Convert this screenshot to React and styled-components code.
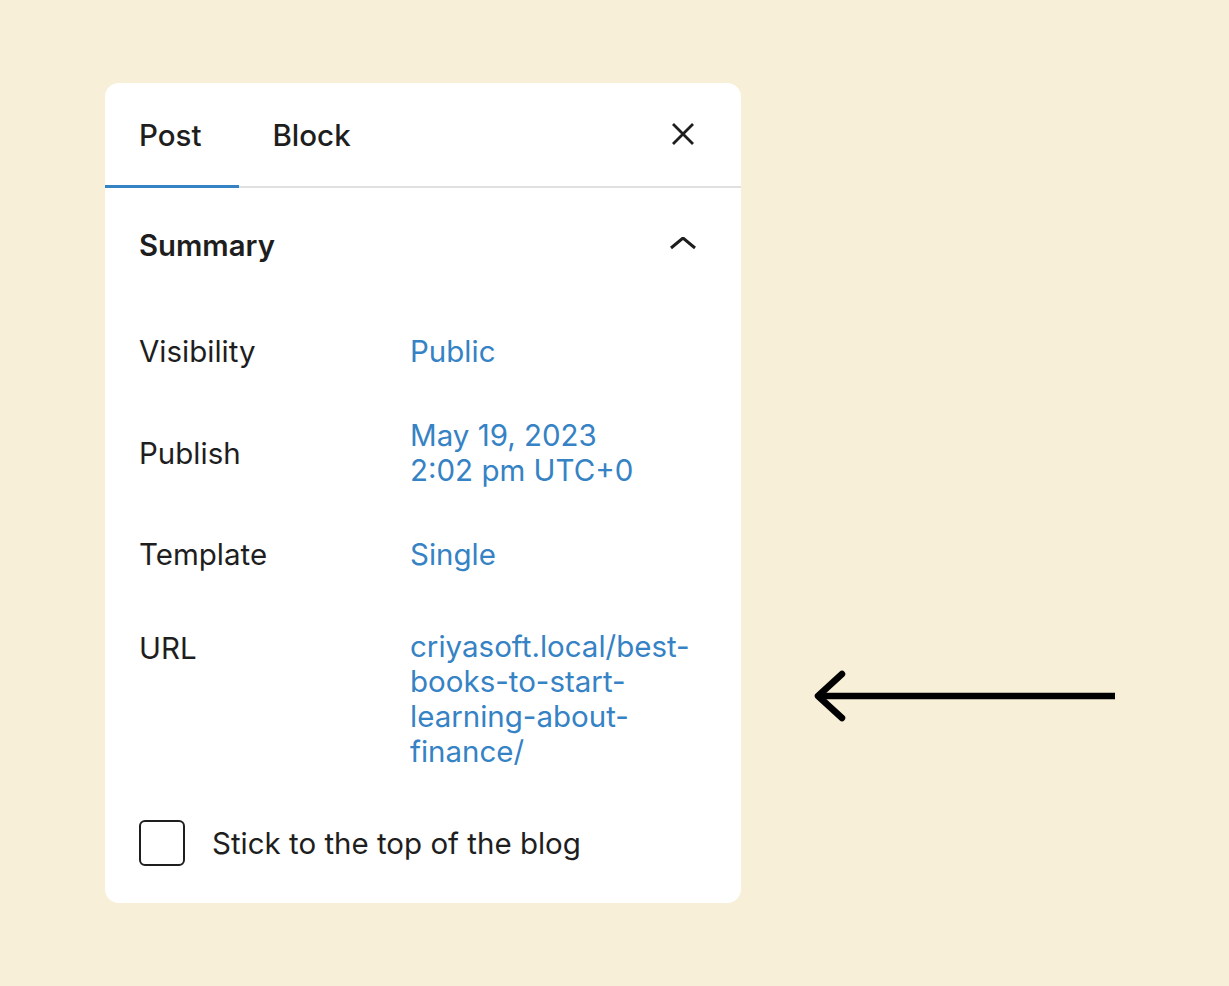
import React from "react";
import styled, { createGlobalStyle } from "styled-components";

const GlobalStyle = createGlobalStyle`
  html, body { margin: 0; padding: 0; }
  body {
    background: #f8efd8;
    font-family: Inter, "Noto Sans", "Liberation Sans", sans-serif;
    color: #1e1e1e;
  }
`;

const Page = styled.div`
  width: 1229px;
  height: 986px;
  display: flex;
  align-items: flex-start;
  padding: 83px 0 0 105px;
  box-sizing: border-box;
  gap: 64px;
`;

const Card = styled.div`
  width: 636px;
  height: 820px;
  background: #ffffff;
  border-radius: 14px;
  overflow: hidden;
  display: flex;
  flex-direction: column;
`;

const Header = styled.div`
  display: flex;
  align-items: stretch;
  height: 103px;
  border-bottom: 2px solid #e0e0e0;
  padding-right: 34px;
`;

const Tab = styled.div`
  display: flex;
  align-items: center;
  padding: 0 37px 0 34px;
  font-size: 29.5px;
  font-weight: 500;
  color: #1e1e1e;
  position: relative;
  ${(p) =>
    p.$active &&
    `
    &::after {
      content: "";
      position: absolute;
      left: 0; right: 0; bottom: -2px;
      height: 3px;
      background: #3582c4;
    }
  `}
`;

const Spacer = styled.div`
  flex: 1;
`;

const IconButton = styled.div`
  width: 48px;
  display: flex;
  align-items: center;
  justify-content: center;
`;

const Body = styled.div`
  display: flex;
  flex-direction: column;
  padding: 39px 34px 0 34px;
`;

const SummaryHead = styled.div`
  display: flex;
  align-items: center;
  justify-content: space-between;
  height: 36px;
`;

const SummaryTitle = styled.div`
  font-size: 29.3px;
  font-weight: 600;
`;

const Rows = styled.div`
  display: flex;
  flex-direction: column;
  gap: 49px;
  margin-top: 71px;
`;

const Row = styled.div`
  display: flex;
  align-items: ${(p) => (p.$top ? "flex-start" : "center")};
  margin-top: ${(p) => (p.$top ? "8px" : "0")};
`;

const Label = styled.div`
  width: 271px;
  flex-shrink: 0;
  font-size: 29.5px;
  line-height: 35px;
  padding-top: ${(p) => (p.$top ? "2px" : "0")};
`;

const Value = styled.div`
  width: 300px;
  font-size: 29.5px;
  line-height: 35px;
  color: #3582c4;
  overflow-wrap: break-word;
`;

const CheckRow = styled.div`
  display: flex;
  align-items: center;
  gap: 27px;
  margin-top: 51px;
`;

const Box = styled.div`
  width: 42px;
  height: 42px;
  border: 2px solid #1e1e1e;
  border-radius: 6px;
`;

const CheckLabel = styled.div`
  font-size: 29.5px;
`;

const ArrowWrap = styled.div`
  margin-top: 586px;
`;

export default function App() {
  return (
    <>
      <GlobalStyle />
      <Page>
        <Card>
          <Header>
            <Tab $active>Post</Tab>
            <Tab>Block</Tab>
            <Spacer />
            <IconButton>
              <svg width="26" height="26" viewBox="0 0 26 26">
                <path d="M3 2 L23 22 M23 2 L3 22" stroke="#1e1e1e" strokeWidth="2.8" fill="none" />
              </svg>
            </IconButton>
          </Header>
          <Body>
            <SummaryHead>
              <SummaryTitle>Summary</SummaryTitle>
              <IconButton>
                <svg width="28" height="16" viewBox="0 0 28 16">
                  <path d="M2 11 L14 1 L26 11" stroke="#1e1e1e" strokeWidth="3" fill="none" />
                </svg>
              </IconButton>
            </SummaryHead>
            <Rows>
              <Row>
                <Label>Visibility</Label>
                <Value>Public</Value>
              </Row>
              <Row>
                <Label>Publish</Label>
                <Value>
                  May 19, 2023
                  <br />
                  2:02 pm UTC+0
                </Value>
              </Row>
              <Row>
                <Label>Template</Label>
                <Value>Single</Value>
              </Row>
              <Row $top>
                <Label $top>URL</Label>
                <Value>criyasoft.local/best-books-to-start-learning-about-finance/</Value>
              </Row>
            </Rows>
            <CheckRow>
              <Box />
              <CheckLabel>Stick to the top of the blog</CheckLabel>
            </CheckRow>
          </Body>
        </Card>
        <ArrowWrap>
          <svg width="320" height="60" viewBox="0 0 320 60">
            <path d="M15 27 H310" stroke="#000" strokeWidth="6.5" fill="none" />
            <path d="M37 5 L13 27 L37 49" stroke="#000" strokeWidth="6.5" fill="none" strokeLinecap="round" strokeLinejoin="round" />
          </svg>
        </ArrowWrap>
      </Page>
    </>
  );
}
